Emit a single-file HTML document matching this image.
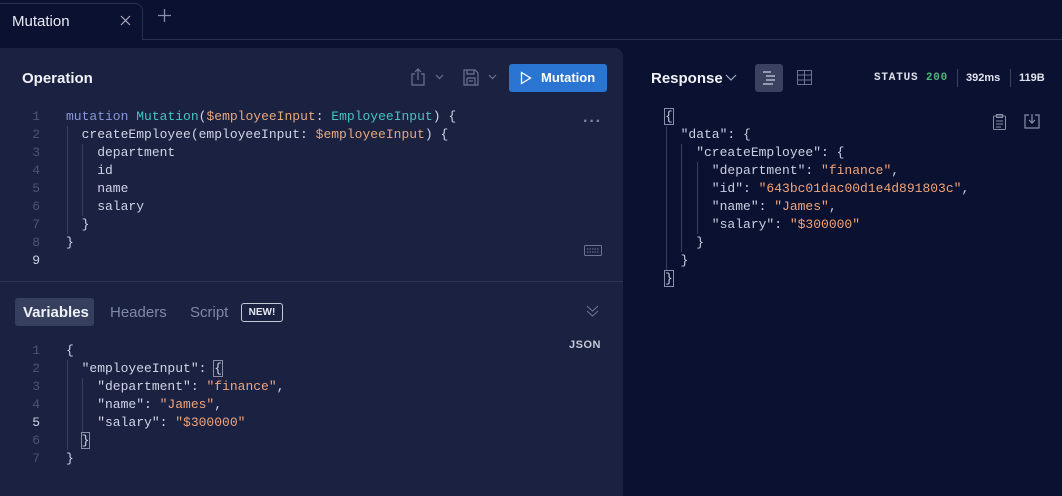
<!DOCTYPE html>
<html><head><meta charset="utf-8"><style>
*{box-sizing:border-box;margin:0;padding:0}
body{width:1062px;height:496px;background:#0b1130;font-family:"Liberation Sans",sans-serif;color:#dfe3ee;position:relative;overflow:hidden}
.mono{font-family:"Liberation Mono",monospace;font-size:13px}
.tab{position:absolute;left:0;top:3px;width:143px;height:37px;border:1px solid #2a3150;border-bottom:none;border-left:none;border-radius:0 8px 0 0;background:#0b1130}
.tabline{position:absolute;left:142px;right:0;top:39px;height:1px;background:#2a3150}
.left{position:absolute;left:0;top:48px;width:623px;height:448px;background:#1b2140;border-radius:0 8px 0 0}
.abs{position:absolute;white-space:pre}
.ln{position:absolute;color:#4d5573;width:40px;text-align:right}
.k{color:#8796d6}.t{color:#45c2c2}.v{color:#e3a87e}.f{color:#cfd5e6}.s{color:#f0a47a}.p{color:#cfd5e6}
.guide{position:absolute;width:1px;background:#39405c}
</style></head><body>
<div class="tab"></div><div class="tabline"></div>
<div class="abs" style="left:12px;top:13px;font-size:15px;color:#e8ebf3">Mutation</div>
<svg class="abs" style="left:120px;top:15px" width="11" height="11"><path d="M1 1L10 10M10 1L1 10" stroke="#aab" stroke-width="1.2"/></svg>
<svg class="abs" style="left:158px;top:9px" width="13" height="13"><path d="M6.5 0V13M0 6.5H13" stroke="#8890a8" stroke-width="1.3"/></svg>

<div class="left"></div>
<div class="abs" style="left:22px;top:70px;font-size:15px;font-weight:bold;color:#f0f2f8">Operation</div>
<svg class="abs" style="left:411px;top:68px" width="14" height="18"><path d="M4 6H1V17H13V6H10M7 12V1M4 4L7 1L10 4" stroke="#6b7394" fill="none" stroke-width="1.2"/></svg>
<svg class="abs" style="left:435px;top:74px" width="9" height="6"><path d="M1 1L4.5 4.5L8 1" stroke="#6b7394" fill="none" stroke-width="1.2"/></svg>
<svg class="abs" style="left:463px;top:69px" width="16" height="17"><path d="M1 1H12L15 4V16H1Z M4 1V5H11V1 M4 9H12V16 M4 9V16 M6 12H10" stroke="#6b7394" fill="none" stroke-width="1.2"/></svg>
<svg class="abs" style="left:488px;top:74px" width="9" height="6"><path d="M1 1L4.5 4.5L8 1" stroke="#6b7394" fill="none" stroke-width="1.2"/></svg>
<div class="abs" style="left:509px;top:64px;width:98px;height:28px;background:#2a74d2;border-radius:3px"></div>
<svg class="abs" style="left:520px;top:71px" width="12" height="14"><path d="M1.5 1.5L10.5 7L1.5 12.5Z" stroke="#fff" fill="none" stroke-width="1.3"/></svg>
<div class="abs" style="left:541px;top:70px;font-size:13px;font-weight:bold;color:#fff">Mutation</div>
<div class="abs" style="left:583px;top:113px;color:#7d86a6;font-size:16px;letter-spacing:1px;font-weight:bold">···</div>
<svg class="abs" style="left:584px;top:245px" width="18" height="11"><rect x="0.5" y="0.5" width="17" height="10" rx="1" stroke="#6b7394" fill="none"/><path d="M3 4H15M3 7H15" stroke="#6b7394" stroke-dasharray="1.5 1"/></svg>

<div class="mono">
<div class="guide" style="left:67px;top:126px;height:108px"></div>
<div class="guide" style="left:82px;top:144px;height:72px"></div>
<div class="ln" style="left:0;top:109px">1</div><div class="abs" style="left:66px;top:109px"><span class="k">mutation</span> <span class="t">Mutation</span><span class="p">(</span><span class="v">$employeeInput</span><span class="p">: </span><span class="t">EmployeeInput</span><span class="p">) {</span></div>
<div class="ln" style="left:0;top:127px">2</div><div class="abs f" style="left:66px;top:127px">  createEmployee(employeeInput: <span class="v">$employeeInput</span>) {</div>
<div class="ln" style="left:0;top:145px">3</div><div class="abs f" style="left:66px;top:145px">    department</div>
<div class="ln" style="left:0;top:163px">4</div><div class="abs f" style="left:66px;top:163px">    id</div>
<div class="ln" style="left:0;top:181px">5</div><div class="abs f" style="left:66px;top:181px">    name</div>
<div class="ln" style="left:0;top:199px">6</div><div class="abs f" style="left:66px;top:199px">    salary</div>
<div class="ln" style="left:0;top:217px">7</div><div class="abs f" style="left:66px;top:217px">  }</div>
<div class="ln" style="left:0;top:235px">8</div><div class="abs f" style="left:66px;top:235px">}</div>
<div class="ln" style="left:0;top:253px;color:#cfd5e6">9</div>
</div>

<div class="abs" style="left:0;top:281px;width:623px;height:1px;background:#2f3656"></div>
<div class="abs" style="left:15px;top:298px;width:79px;height:28px;background:#36405e;border-radius:3px"></div>
<div class="abs" style="left:23px;top:304px;font-size:15px;font-weight:bold;color:#f0f2f8">Variables</div>
<div class="abs" style="left:110px;top:304px;font-size:15px;color:#7f88a8">Headers</div>
<div class="abs" style="left:190px;top:304px;font-size:15px;color:#7f88a8">Script</div>
<div class="abs" style="left:241px;top:303px;width:42px;height:19px;border:1px solid #c4c9d8;border-radius:3px;font-size:10px;font-weight:bold;color:#e6e9f0;text-align:center;line-height:17px">NEW!</div>
<svg class="abs" style="left:586px;top:305px" width="13" height="13"><path d="M1 1L6.5 6L12 1M1 6L6.5 11L12 6" stroke="#6b7394" fill="none" stroke-width="1.1"/></svg>
<div class="abs" style="left:569px;top:339px;font-size:11px;font-weight:bold;color:#c4c9d8;letter-spacing:.5px">JSON</div>

<div class="mono">
<div class="guide" style="left:67px;top:360px;height:90px"></div>
<div class="guide" style="left:82px;top:378px;height:54px"></div>
<div class="ln" style="left:0;top:343px">1</div><div class="abs f" style="left:66px;top:343px">{</div>
<div class="ln" style="left:0;top:361px">2</div><div class="abs f" style="left:66px;top:361px">  "employeeInput": <span style="outline:1px solid #8890a8">{</span></div>
<div class="ln" style="left:0;top:379px">3</div><div class="abs f" style="left:66px;top:379px">    "department": <span class="s">"finance"</span>,</div>
<div class="ln" style="left:0;top:397px">4</div><div class="abs f" style="left:66px;top:397px">    "name": <span class="s">"James"</span>,</div>
<div class="ln" style="left:0;top:415px;color:#cfd5e6">5</div><div class="abs f" style="left:66px;top:415px">    "salary": <span class="s">"$300000"</span></div>
<div class="ln" style="left:0;top:433px">6</div><div class="abs f" style="left:66px;top:433px">  <span style="outline:1px solid #8890a8">}</span></div>
<div class="ln" style="left:0;top:451px">7</div><div class="abs f" style="left:66px;top:451px">}</div>
</div>

<!-- right -->
<div class="abs" style="left:651px;top:70px;font-size:15px;font-weight:bold;color:#f0f2f8">Response</div>
<svg class="abs" style="left:725px;top:74px" width="12" height="8"><path d="M1 1L6 6L11 1" stroke="#a0a8c0" fill="none" stroke-width="1.2"/></svg>
<div class="abs" style="left:755px;top:64px;width:28px;height:28px;background:#3a4260;border-radius:3px"></div>
<svg class="abs" style="left:762px;top:71px" width="14" height="14"><path d="M1 1H9M4 5H13M4 9H13M1 13H11" stroke="#c8cee0" stroke-width="1.2"/></svg>
<svg class="abs" style="left:797px;top:70px" width="15" height="15"><rect x="0.5" y="0.5" width="14" height="14" stroke="#6b7394" fill="none"/><path d="M0.5 5H14.5M0.5 10H14.5M7.5 0.5V14.5" stroke="#6b7394"/></svg>
<div class="abs" style="left:874px;top:72px;font-size:11px;font-weight:bold;letter-spacing:.8px;color:#dfe3ee;font-family:'Liberation Mono',monospace">STATUS <span style="color:#4fb87a">200</span></div>
<div class="abs" style="left:957px;top:69px;width:1px;height:18px;background:#3a4260"></div>
<div class="abs" style="left:966px;top:72px;font-size:11px;font-weight:bold;color:#dfe3ee">392ms</div>
<div class="abs" style="left:1010px;top:69px;width:1px;height:18px;background:#3a4260"></div>
<div class="abs" style="left:1019px;top:72px;font-size:11px;font-weight:bold;color:#dfe3ee">119B</div>
<svg class="abs" style="left:993px;top:114px" width="13" height="16"><rect x="0.5" y="2" width="12" height="13.5" rx="1" stroke="#8890a8" fill="none"/><rect x="3.5" y="0.5" width="6" height="3" stroke="#8890a8" fill="none"/><path d="M3 7H10M3 10H10M3 13H8" stroke="#8890a8"/></svg>
<svg class="abs" style="left:1024px;top:113px" width="16" height="16"><path d="M5 2H1V15H15V2H11M8 1V10M5 7L8 10L11 7" stroke="#8890a8" fill="none" stroke-width="1.2"/></svg>

<div class="mono" style="color:#c8cfe2">
<div class="guide" style="left:666px;top:126px;height:144px"></div>
<div class="guide" style="left:681px;top:144px;height:108px"></div>
<div class="guide" style="left:697px;top:162px;height:72px"></div>
<div class="abs" style="left:665px;top:109px"><span style="outline:1px solid #8890a8">{</span></div>
<div class="abs" style="left:665px;top:127px">  "data": {</div>
<div class="abs" style="left:665px;top:145px">    "createEmployee": {</div>
<div class="abs" style="left:665px;top:163px">      "department": <span class="s">"finance"</span>,</div>
<div class="abs" style="left:665px;top:181px">      "id": <span class="s">"643bc01dac00d1e4d891803c"</span>,</div>
<div class="abs" style="left:665px;top:199px">      "name": <span class="s">"James"</span>,</div>
<div class="abs" style="left:665px;top:217px">      "salary": <span class="s">"$300000"</span></div>
<div class="abs" style="left:665px;top:235px">    }</div>
<div class="abs" style="left:665px;top:253px">  }</div>
<div class="abs" style="left:665px;top:271px"><span style="outline:1px solid #8890a8">}</span></div>
</div>
</body></html>
